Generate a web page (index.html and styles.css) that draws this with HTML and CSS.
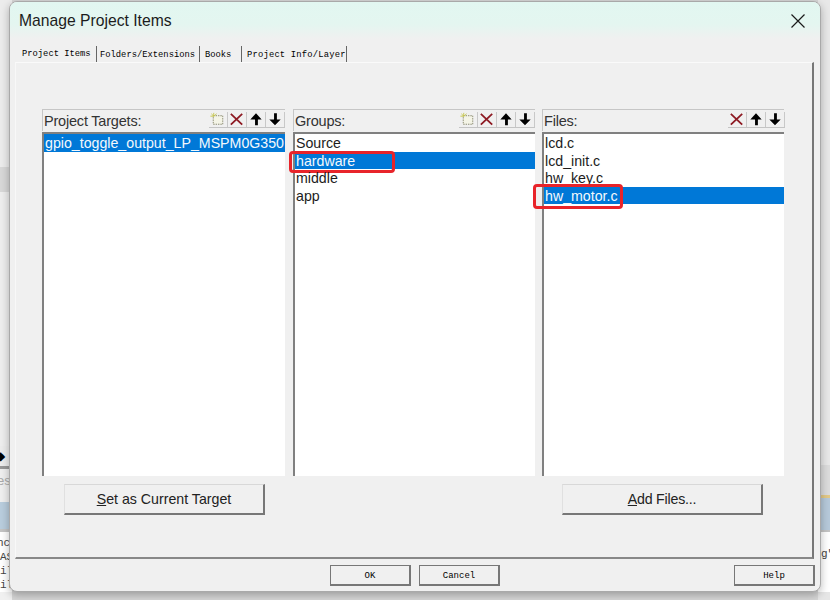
FILE: index.html
```html
<!DOCTYPE html>
<html lang="en">
<head>
<meta charset="utf-8">
<title>Manage Project Items</title>
<link rel="stylesheet" href="styles.css">
</head>
<body>
<div class="backdrop">
  <div class="back-left">
    <div class="bl-top"></div>
    <div class="bl-band"></div>
    <div class="bl-white"></div>
    <div class="bl-icon">&#9670;</div>
    <div class="bl-tab">es</div>
    <div class="bl-blue"></div>
    <div class="bl-code">nc<br>AS<br>il<br>il</div>
  </div>
  <div class="back-right">
    <div class="br-top"></div>
    <div class="br-blue"></div>
    <div class="br-code">g"</div>
  </div>
</div>
<div class="dialog">
  <header class="titlebar">
    <span class="title">Manage Project Items</span>
    <svg class="close" width="14" height="14" viewBox="0 0 14 14"><path d="M0.5 0.5 13.5 13.5M13.5 0.5 0.5 13.5" stroke="#1a1a1a" stroke-width="1.2" fill="none"/></svg>
  </header>
  <nav class="tabs">
    <span class="tab tab-active">Project Items</span>
    <span class="tab tab-f">Folders/Extensions</span>
    <span class="tab tab-b">Books</span>
    <span class="tab tab-p">Project Info/Layer</span>
  </nav>
  <section class="panel">
    <div class="columns">
      <div class="col col-a">
        <div class="col-head">
          <span class="col-label">Project Targets:</span>
          <span class="tools">
            <svg class="tool" viewBox="0 0 19 15"><use href="#i-new"/></svg>
            <svg class="tool" viewBox="0 0 19 15"><use href="#i-del"/></svg>
            <svg class="tool" viewBox="0 0 19 15"><use href="#i-up"/></svg>
            <svg class="tool" viewBox="0 0 19 15"><use href="#i-down"/></svg>
          </span>
        </div>
        <ul class="list">
          <li class="sel">gpio_toggle_output_LP_MSPM0G350</li>
        </ul>
      </div>
      <div class="col">
        <div class="col-head">
          <span class="col-label">Groups:</span>
          <span class="tools">
            <svg class="tool" viewBox="0 0 19 15"><use href="#i-new"/></svg>
            <svg class="tool" viewBox="0 0 19 15"><use href="#i-del"/></svg>
            <svg class="tool" viewBox="0 0 19 15"><use href="#i-up"/></svg>
            <svg class="tool" viewBox="0 0 19 15"><use href="#i-down"/></svg>
          </span>
        </div>
        <ul class="list">
          <li>Source</li>
          <li class="sel">hardware<span class="mark mark-hw"></span></li>
          <li>middle</li>
          <li>app</li>
        </ul>
      </div>
      <div class="col col-c">
        <div class="col-head">
          <span class="col-label">Files:</span>
          <span class="tools">
            <svg class="tool" viewBox="0 0 19 15"><use href="#i-del"/></svg>
            <svg class="tool" viewBox="0 0 19 15"><use href="#i-up"/></svg>
            <svg class="tool" viewBox="0 0 19 15"><use href="#i-down"/></svg>
          </span>
        </div>
        <ul class="list">
          <li>lcd.c</li>
          <li>lcd_init.c</li>
          <li>hw_key.c</li>
          <li class="sel">hw_motor.c<span class="mark mark-motor"></span></li>
        </ul>
      </div>
    </div>
    <div class="actions">
      <button class="btn btn-set"><u>S</u>et as Current Target</button>
      <button class="btn btn-add"><u>A</u>dd Files...</button>
    </div>
  </section>
  <footer class="footer">
    <button class="fbtn fbtn-ok">OK</button>
    <button class="fbtn fbtn-cancel">Cancel</button>
    <button class="fbtn fbtn-help">Help</button>
  </footer>
</div>
<svg class="defs" width="0" height="0">
  <defs>
    <g id="i-new"><path d="M4.5 3.5h10v9h-10z" fill="#f4f4e6" stroke="#86866c" stroke-dasharray="1.5 1"/><path d="M2.5 1.5l2.5 2.5M5 0.5v3.5M8 1.5l-3 2.5M1.5 4h3.5" stroke="#c8c850" fill="none"/></g>
    <g id="i-del"><path d="M3 1.5 15 13M15 1.5 3 13" stroke="#8e1b24" stroke-width="1.9" fill="none"/></g>
    <g id="i-up"><path d="M9.5 1 15.5 7.5H11.5V13.5H8.5V7.5H3.5z" fill="#000"/></g>
    <g id="i-down"><path d="M8.5 1H11.5V7.5H15.5L9.5 13.5 3.5 7.5H8.5z" fill="#000"/></g>
  </defs>
</svg>
</body>
</html>
```
FILE: styles.css
```css
* { box-sizing: border-box; }
html, body { margin: 0; padding: 0; }
body {
  width: 830px;
  height: 600px;
  position: relative;
  overflow: hidden;
  background: #d6d6d6;
  font-family: "Liberation Sans", Arial, sans-serif;
}
.backdrop { display: flex; justify-content: space-between; height: 600px; }
.back-left { width: 12px; display: flex; flex-direction: column; background: #f0f0f0; }
.bl-top { height: 167px; background: #ececec; }
.bl-band { height: 25px; background: #d8d8d8; }
.bl-white { height: 254px; background: #eeeeee; }
.bl-icon { height: 23px; font: 12px/20px "DejaVu Sans", sans-serif; color: #000; background: #ececec; border-bottom: 3px solid #999; text-indent: -4px; }
.bl-tab { height: 33px; font: 13px/24px "Liberation Sans", sans-serif; color: #aaa; background: #efefef; text-indent: -3px; }
.bl-blue { height: 30px; background: #b9cddd; border-bottom: 3px solid #c4c4c4; }
.bl-code { height: 60px; font: 11px/14px "Liberation Mono", monospace; color: #444; background: #fff; padding-top: 4px; text-indent: -3px; }
.back-right { width: 12px; display: flex; flex-direction: column; background: #e6e6e6; }
.br-top { height: 495px; background: linear-gradient(#e8e8e8 94%, #dcdcdc 94%); }
.br-blue { height: 37px; background: #b6c9da; border-top: 3px solid #e3c987; border-bottom: 2px solid #c4c4c4; }
.br-code { height: 60px; background: #fff; font: 11px/13px "Liberation Mono", monospace; color: #444; padding-top: 16px; padding-left: 3px; }

.dialog {
  position: absolute;
  left: 9px;
  top: 1px;
  width: 812px;
  height: 591px;
  display: flex;
  flex-direction: column;
  background: #f0f0f0;
  border: 1px solid #a9a9a9;
  border-radius: 8px;
  box-shadow: 0 3px 8px rgba(0,0,0,.28);
  overflow: hidden;
}
.titlebar {
  height: 37px;
  flex: none;
  display: flex;
  align-items: center;
  justify-content: space-between;
  padding: 0 15px 0 9px;
  background: linear-gradient(#e2f7f1, #e4f6f0 60%, #f0f0f0);
}
.title { font: 15.7px/20px "Liberation Sans", Arial, sans-serif; color: #1c1c1c; }
.tabs { height: 23px; flex: none; display: flex; font: 8.8px/14px "Liberation Mono", "Courier New", monospace; color: #000; }
.tab { display: block; height: 16px; margin-top: 7px; padding-top: 2px; border-right: 1px solid #666; white-space: nowrap; }
.tab-active { width: 87px; padding-left: 12px; padding-top: 1px; }
.tab-f { width: 103px; padding-left: 3px; }
.tab-b { width: 42px; padding-left: 5px; }
.tab-p { width: 105px; padding-left: 5px; letter-spacing: 0.2px; }
.panel {
  flex: 1;
  margin: 0 6px 0 5px;
  background: #f0f0f0;
  border-top: 1px solid #fafafa;
  border-left: 1px solid #f8f8f8;
  border-right: 2px solid #777;
  border-bottom: 2px solid #888;
  padding: 46px 0 0 26px;
}
.columns { display: flex; gap: 8px; }
.col { width: 242px; flex: none; }
.col-a { width: 243px; }
.col-c { margin-left: -1px; }
.col-head {
  height: 22px;
  display: flex;
  justify-content: space-between;
  align-items: flex-start;
  border-top: 1px solid #c6c6c6;
  border-left: 1px solid #c6c6c6;
  padding: 0 0 0 1px;
}
.col-label { font: 14.5px/20px "Liberation Sans", Arial, sans-serif; color: #333; letter-spacing: -0.2px; margin-top: 1px; }
.tools { display: flex; height: 16px; margin-top: 2px; border-bottom: 1px solid #c4c4c4; }
.col-c .tools { margin-right: -1px; }
.tool { width: 19px; height: 15px; border-right: 1px solid #c8c8c8; display: block; }
.list {
  list-style: none;
  margin: 1px 0 0;
  padding: 0;
  height: 344px;
  background: #fff;
  border-left: 2px solid #808080;
  border-top: 2px solid #808080;
  font: 14.2px/19px "Liberation Sans", Arial, sans-serif;
  color: #1c1c1c;
}
.list li { height: 17.5px; padding-left: 1px; position: relative; white-space: nowrap; }
.list .sel { background: #0078d7; color: #f4f8fc; }
.mark { position: absolute; border: 3px solid #e8242a; border-radius: 4px; }
.mark-hw { left: -6px; top: -1px; width: 106px; height: 22px; }
.mark-motor { left: -11px; top: -3px; width: 90px; height: 25px; }
.actions { display: flex; padding: 8px 0 0 22px; }
.btn {
  height: 31px;
  background: #f0f0f0;
  border: 0;
  border-top: 1px solid #d8d8d8;
  border-left: 1px solid #e0e0e0;
  border-right: 2px solid #777;
  border-bottom: 2px solid #777;
  font: 14.2px/20px "Liberation Sans", Arial, sans-serif;
  color: #222;
  padding: 0;
}
.btn-set { width: 201px; }
.btn-add { width: 201px; margin-left: 297px; letter-spacing: -0.2px; }
.footer { height: 32px; flex: none; display: flex; padding: 6px 0 0 320px; }
.fbtn {
  height: 21px;
  width: 81px;
  padding: 1px 0 0;
  background: #f0f0f0;
  border: 1px solid #777;
  border-right-width: 2px;
  border-bottom-width: 2px;
  font: 9px/14px "Liberation Mono", "Courier New", monospace;
  color: #000;
}
.fbtn-cancel { margin-left: 8px; }
.fbtn-help { margin-left: 234px; }
.defs { position: absolute; }
```
